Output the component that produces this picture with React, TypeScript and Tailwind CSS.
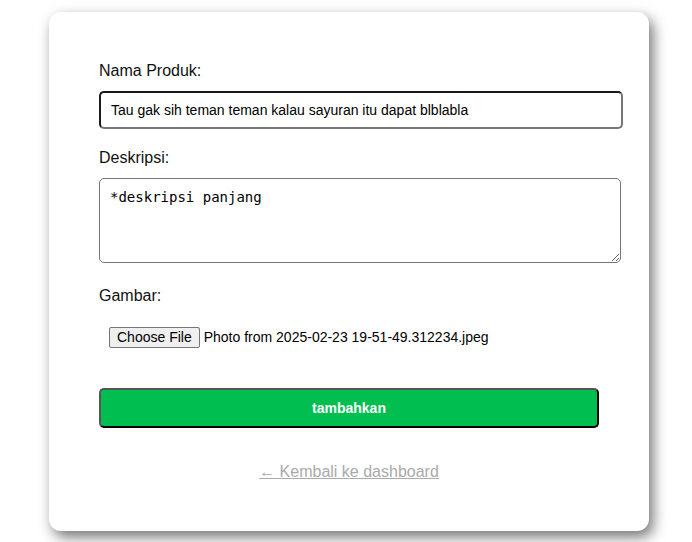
const FILE_NAME = 'Photo from 2025-02-23 19-51-49.312234.jpeg'

export default function App() {
  return (
    <div className="min-h-[542px] bg-white pt-[12px] font-['Liberation_Sans',Arial,sans-serif] text-[#111]">
      <div className="ml-[49px] w-[600px] rounded-[12px] bg-white px-[50px] pt-[50px] pb-[50px] shadow-[4px_6px_14px_rgba(0,0,0,0.55)]">
        <form onSubmit={e => e.preventDefault()}>
          <label className="block text-base leading-[18px]">Nama Produk:</label>
          <input
            type="text"
            defaultValue="Tau gak sih teman teman kalau sayuran itu dapat blblabla"
            className="mt-[11px] box-content block h-[18px] w-[500px] rounded-[5px] border-2 border-t-[#1a1a1a] border-l-[#1a1a1a] border-b-[#777] border-r-[#777] bg-white px-[10px] py-[8px] text-[14px] text-black outline-none"
          />

          <label className="mt-[20px] block text-base leading-[18px]">Deskripsi:</label>
          <textarea
            defaultValue="*deskripsi panjang"
            spellCheck={false}
            className="mt-[11px] box-content block h-[63px] w-[500px] rounded-[5px] border border-[#767676] bg-white p-[10px] font-['DejaVu_Sans_Mono',monospace] text-[14px] leading-[16px] text-black outline-none"
          />

          <label className="mt-[24px] block text-base leading-[18px]">Gambar:</label>
          <div className="mt-[12px] flex items-center p-[10px] text-[14px]">
            <button
              type="button"
              className="h-[21px] rounded-[2px] border border-[#767676] bg-[#efefef] px-[7px] text-[14px] leading-[19px] text-black"
            >
              Choose File
            </button>
            <span className="ml-[4px] text-black">{FILE_NAME}</span>
          </div>

          <button
            type="submit"
            className="mt-[30px] block h-[40px] w-[500px] rounded-[5px] border-2 border-t-[#555] border-l-[#555] border-b-black border-r-black bg-[#00bf50] text-[14px] font-bold text-white"
          >
            tambahkan
          </button>
        </form>

        <div className="mt-[35px] text-center text-base leading-[18px]">
          <a href="#" className="text-[#aaa] underline">
            ← Kembali ke dashboard
          </a>
        </div>
      </div>
    </div>
  )
}
